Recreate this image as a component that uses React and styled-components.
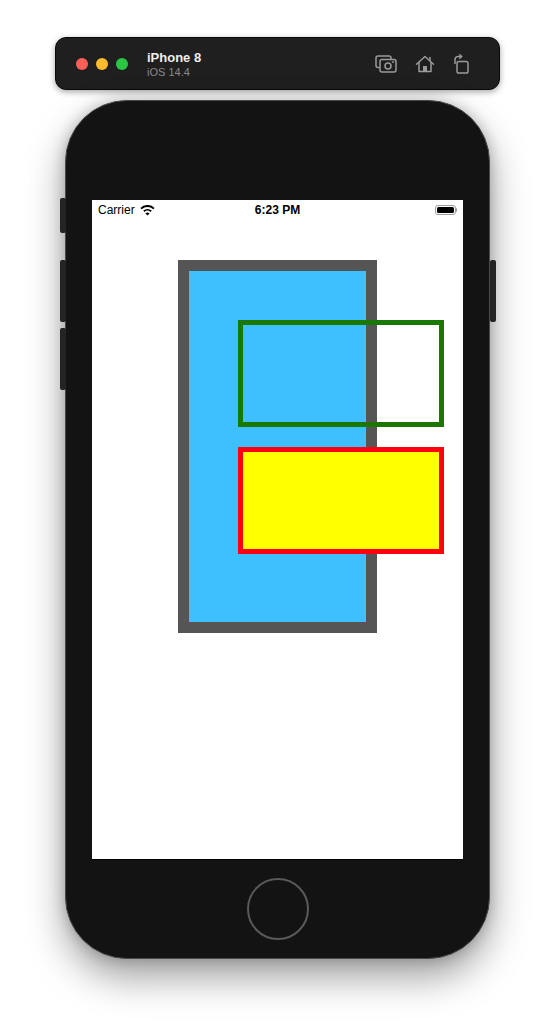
import React from "react";
import styled, { createGlobalStyle } from "styled-components";

const GlobalStyle = createGlobalStyle`
  html, body {
    margin: 0;
    padding: 0;
    background: #ffffff;
  }
  body {
    font-family: "Liberation Sans", Arial, sans-serif;
  }
`;

const Page = styled.div`
  width: 555px;
  height: 1035px;
  display: flex;
  flex-direction: column;
  align-items: center;
  padding-top: 37px;
  box-sizing: border-box;
  overflow: hidden;
`;

/* simulator toolbar */
const Toolbar = styled.div`
  width: 445px;
  height: 53px;
  box-sizing: border-box;
  display: flex;
  align-items: center;
  padding: 0 30px 0 20px;
  background: #1f1f1f;
  border: 1px solid #0a0a0a;
  border-radius: 11px;
  box-shadow: 0 2px 6px rgba(0, 0, 0, 0.35);
`;

const Lights = styled.div`
  display: flex;
  gap: 8px;
`;

const Light = styled.span`
  width: 12px;
  height: 12px;
  border-radius: 50%;
  background: ${(props) => props.color};
`;

const Title = styled.div`
  display: flex;
  flex-direction: column;
  margin-left: 19px;
  margin-top: 1px;
`;

const DeviceName = styled.div`
  font-size: 13px;
  font-weight: bold;
  color: #eeeeee;
  line-height: 15px;
`;

const DeviceOs = styled.div`
  font-size: 11px;
  color: #8a8a8a;
  line-height: 14px;
`;

const ToolIcons = styled.div`
  margin-left: auto;
  display: flex;
  align-items: center;
  gap: 18px;
`;

const ToolIcon = styled.svg`
  display: block;
  fill: none;
  stroke: #9a9a9a;
  stroke-width: 1.5;
  stroke-linecap: round;
  stroke-linejoin: round;
`;

/* phone */
const Phone = styled.div`
  position: relative;
  margin-top: 10px;
  width: 425px;
  height: 859px;
  box-sizing: border-box;
  background: #131313;
  border: 1.5px solid #4a4a4a;
  border-radius: 62px;
  box-shadow: 0 18px 38px rgba(0, 0, 0, 0.38), 0 0 14px rgba(0, 0, 0, 0.22);
  display: flex;
  flex-direction: column;
  align-items: center;
  padding-top: 98.5px;
`;

const SideButton = styled.span`
  position: absolute;
  top: ${(props) => props.top}px;
  height: ${(props) => props.height}px;
  width: 6px;
  background: #242424;
  border-radius: 2px;
  ${(props) => (props.right ? "right: -6.5px;" : "left: -6.5px;")}
`;

const Screen = styled.div`
  width: 371px;
  height: 660px;
  background: #ffffff;
  display: flex;
  flex-direction: column;
  border-bottom: 1px solid #000;
  box-sizing: border-box;
`;

const StatusBar = styled.div`
  height: 20px;
  display: grid;
  grid-template-columns: 1fr auto 1fr;
  align-items: center;
  padding: 0 6px;
  font-size: 12px;
  color: #000;
`;

const Carrier = styled.div`
  display: flex;
  align-items: center;
  gap: 5px;
  padding-top: 1px;
`;

const Clock = styled.div`
  font-weight: bold;
  padding-top: 1px;
`;

const Battery = styled.div`
  justify-self: end;
  display: flex;
  align-items: center;
  margin-right: 0px;
`;

const BatteryBody = styled.span`
  width: 21px;
  height: 10px;
  box-sizing: border-box;
  border: 1px solid #9c9c9c;
  border-radius: 3px;
  padding: 1px;
  display: flex;
`;

const BatteryFill = styled.span`
  flex: 1;
  background: #000;
  border-radius: 1.5px;
`;

const BatteryCap = styled.span`
  width: 1.5px;
  height: 4px;
  background: #9c9c9c;
  border-radius: 0 1px 1px 0;
`;

const Canvas = styled.div`
  position: relative;
  flex: 1;
`;

const Box = styled.div`
  position: absolute;
  left: ${(props) => props.x}px;
  top: ${(props) => props.y}px;
  width: ${(props) => props.w}px;
  height: ${(props) => props.h}px;
  box-sizing: border-box;
  border: ${(props) => props.bw}px solid ${(props) => props.line};
  background: ${(props) => props.fill || "transparent"};
`;

const HomeButton = styled.div`
  margin-top: 18px;
  width: 62px;
  height: 62px;
  box-sizing: border-box;
  border-radius: 50%;
  border: 2.5px solid #5a5a5a;
`;

const Wifi = () => (
  <svg width="15" height="11" viewBox="0 0 15 11">
    <path d="M7.5 10.6 L5.4 8.5 A3 3 0 0 1 9.6 8.5 Z" fill="#000" />
    <path
      d="M3.9 6.3 A5.2 5.2 0 0 1 11.1 6.3"
      stroke="#000"
      strokeWidth="1.9"
      fill="none"
    />
    <path
      d="M1.1 3.6 A9 9 0 0 1 13.9 3.6"
      stroke="#000"
      strokeWidth="1.9"
      fill="none"
    />
  </svg>
);

const App = () => {
  return (
    <>
      <GlobalStyle />
      <Page>
        <Toolbar>
          <Lights>
            <Light color="#fe5f57" />
            <Light color="#febb2e" />
            <Light color="#29c840" />
          </Lights>
          <Title>
            <DeviceName>iPhone 8</DeviceName>
            <DeviceOs>iOS 14.4</DeviceOs>
          </Title>
          <ToolIcons>
            <ToolIcon width="22" height="18" viewBox="0 0 22 18">
              <path d="M4 12.5 H3 A2 2 0 0 1 1 10.5 V3 A2 2 0 0 1 3 1 H14 A2 2 0 0 1 16 3 V4" />
              <rect x="5" y="4.5" width="16" height="12.5" rx="2" />
              <circle cx="13" cy="11" r="3" />
              <path d="M17.5 7 H18.5" />
            </ToolIcon>
            <ToolIcon width="20" height="18" viewBox="0 0 20 18">
              <path d="M1.5 9.2 L10 1.5 L18.5 9.2" />
              <path d="M15 5.5 V2.5" />
              <path d="M4 7.5 V16.5 H16 V7.5" />
              <rect x="8" y="11" width="4" height="5.5" fill="#9a9a9a" stroke="none" />
            </ToolIcon>
            <ToolIcon width="16" height="20" viewBox="0 0 16 20">
              <rect x="4" y="7.5" width="11" height="11.5" rx="1.8" />
              <path d="M2 9.5 V5.5 A3 3 0 0 1 5 2.5 H8.5" />
              <path d="M6.8 0.8 L8.6 2.5 L6.8 4.2" />
            </ToolIcon>
          </ToolIcons>
        </Toolbar>

        <Phone>
          <SideButton top={97} height={35} />
          <SideButton top={159} height={62} />
          <SideButton top={227} height={62} />
          <SideButton right top={159} height={62} />
          <Screen>
            <StatusBar>
              <Carrier>
                Carrier <Wifi />
              </Carrier>
              <Clock>6:23 PM</Clock>
              <Battery>
                <BatteryBody>
                  <BatteryFill />
                </BatteryBody>
                <BatteryCap />
              </Battery>
            </StatusBar>
            <Canvas>
              <Box x={86} y={40} w={199} h={373} bw={11} line="#555555" fill="#3ec0ff" />
              <Box x={146} y={100} w={206} h={107} bw={5} line="#1a7700" />
              <Box x={146} y={227} w={206} h={107} bw={5} line="#fe0010" fill="#ffff00" />
            </Canvas>
          </Screen>
          <HomeButton />
        </Phone>
      </Page>
    </>
  );
};

export default App;
